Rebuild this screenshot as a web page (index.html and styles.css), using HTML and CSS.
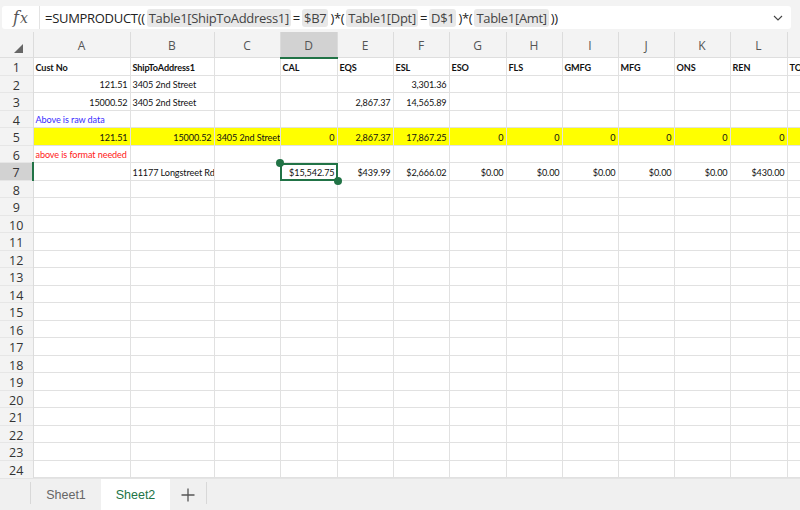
FILE: index.html
```html
<!DOCTYPE html>
<html>
<head>
<meta charset="utf-8">
<link rel="stylesheet" href="styles.css">
</head>
<body>
<div class="app">
  <div class="formula-bar">
    <div class="fbox">
      <div class="fx"><i>f</i><i class="x">x</i></div>
      <div class="ftext">=SUMPRODUCT((<span class="tok">Table1[ShipToAddress1]</span>=<span class="tok">$B7</span>)*(<span class="tok">Table1[Dpt]</span>=<span class="tok">D$1</span>)*(<span class="tok">Table1[Amt]</span>))</div>
      <svg class="chev" width="10" height="6" viewBox="0 0 10 6"><path d="M1 1 L5 5 L9 1" fill="none" stroke="#444" stroke-width="1.1"/></svg>
    </div>
  </div>
  <div class="sheet">
    <table class="grid">
      <colgroup>
        <col class="w-rh"><col class="w-a"><col class="w-b"><col class="w-c"><col class="w-57"><col class="w-56"><col class="w-56"><col class="w-57"><col class="w-56"><col class="w-56"><col class="w-56"><col class="w-56"><col class="w-57"><col class="w-m">
      </colgroup>
      <thead>
        <tr>
          <th class="corner"><svg width="9" height="9" viewBox="0 0 9 9"><path d="M9 0 L9 9 L0 9 Z" fill="#666"/></svg></th>
          <th>A</th><th>B</th><th>C</th><th class="sel">D</th><th>E</th><th>F</th><th>G</th><th>H</th><th>I</th><th>J</th><th>K</th><th>L</th><th></th>
        </tr>
      </thead>
      <tbody>
        <tr><th>1</th><td class="b">Cust No</td><td class="b">ShipToAddress1</td><td></td><td class="b">CAL</td><td class="b">EQS</td><td class="b">ESL</td><td class="b">ESO</td><td class="b">FLS</td><td class="b">GMFG</td><td class="b">MFG</td><td class="b">ONS</td><td class="b">REN</td><td class="b">TO</td></tr>
        <tr><th>2</th><td class="r">121.51</td><td>3405 2nd Street</td><td></td><td></td><td></td><td class="r">3,301.36</td><td></td><td></td><td></td><td></td><td></td><td></td><td></td></tr>
        <tr><th>3</th><td class="r">15000.52</td><td>3405 2nd Street</td><td></td><td></td><td class="r">2,867.37</td><td class="r">14,565.89</td><td></td><td></td><td></td><td></td><td></td><td></td><td></td></tr>
        <tr><th>4</th><td class="blue">Above is raw data</td><td></td><td></td><td></td><td></td><td></td><td></td><td></td><td></td><td></td><td></td><td></td><td></td></tr>
        <tr class="yellow"><th>5</th><td class="r">121.51</td><td class="r">15000.52</td><td>3405 2nd Street</td><td class="r">0</td><td class="r">2,867.37</td><td class="r">17,867.25</td><td class="r">0</td><td class="r">0</td><td class="r">0</td><td class="r">0</td><td class="r">0</td><td class="r">0</td><td></td></tr>
        <tr><th>6</th><td class="red">above is format needed</td><td></td><td></td><td></td><td></td><td></td><td></td><td></td><td></td><td></td><td></td><td></td><td></td></tr>
        <tr><th class="selrow">7</th><td></td><td>11177 Longstreet Rd</td><td></td><td class="r active"><div class="cellwrap">$15,542.75<span class="selbox"></span><span class="dot tl"></span><span class="dot br"></span></div></td><td class="r">$439.99</td><td class="r">$2,666.02</td><td class="r">$0.00</td><td class="r">$0.00</td><td class="r">$0.00</td><td class="r">$0.00</td><td class="r">$0.00</td><td class="r">$430.00</td><td></td></tr>
        <tr><th>8</th><td></td><td></td><td></td><td></td><td></td><td></td><td></td><td></td><td></td><td></td><td></td><td></td><td></td></tr>
        <tr><th>9</th><td></td><td></td><td></td><td></td><td></td><td></td><td></td><td></td><td></td><td></td><td></td><td></td><td></td></tr>
        <tr><th>10</th><td></td><td></td><td></td><td></td><td></td><td></td><td></td><td></td><td></td><td></td><td></td><td></td><td></td></tr>
        <tr><th>11</th><td></td><td></td><td></td><td></td><td></td><td></td><td></td><td></td><td></td><td></td><td></td><td></td><td></td></tr>
        <tr><th>12</th><td></td><td></td><td></td><td></td><td></td><td></td><td></td><td></td><td></td><td></td><td></td><td></td><td></td></tr>
        <tr><th>13</th><td></td><td></td><td></td><td></td><td></td><td></td><td></td><td></td><td></td><td></td><td></td><td></td><td></td></tr>
        <tr><th>14</th><td></td><td></td><td></td><td></td><td></td><td></td><td></td><td></td><td></td><td></td><td></td><td></td><td></td></tr>
        <tr><th>15</th><td></td><td></td><td></td><td></td><td></td><td></td><td></td><td></td><td></td><td></td><td></td><td></td><td></td></tr>
        <tr><th>16</th><td></td><td></td><td></td><td></td><td></td><td></td><td></td><td></td><td></td><td></td><td></td><td></td><td></td></tr>
        <tr><th>17</th><td></td><td></td><td></td><td></td><td></td><td></td><td></td><td></td><td></td><td></td><td></td><td></td><td></td></tr>
        <tr><th>18</th><td></td><td></td><td></td><td></td><td></td><td></td><td></td><td></td><td></td><td></td><td></td><td></td><td></td></tr>
        <tr><th>19</th><td></td><td></td><td></td><td></td><td></td><td></td><td></td><td></td><td></td><td></td><td></td><td></td><td></td></tr>
        <tr><th>20</th><td></td><td></td><td></td><td></td><td></td><td></td><td></td><td></td><td></td><td></td><td></td><td></td><td></td></tr>
        <tr><th>21</th><td></td><td></td><td></td><td></td><td></td><td></td><td></td><td></td><td></td><td></td><td></td><td></td><td></td></tr>
        <tr><th>22</th><td></td><td></td><td></td><td></td><td></td><td></td><td></td><td></td><td></td><td></td><td></td><td></td><td></td></tr>
        <tr><th>23</th><td></td><td></td><td></td><td></td><td></td><td></td><td></td><td></td><td></td><td></td><td></td><td></td><td></td></tr>
        <tr><th>24</th><td></td><td></td><td></td><td></td><td></td><td></td><td></td><td></td><td></td><td></td><td></td><td></td><td></td></tr>
      </tbody>
    </table>
  </div>
  <div class="tabs">
    <div class="tab-sep"></div>
    <div class="tab">Sheet1</div>
    <div class="tab active">Sheet2</div>
    <div class="tab add"><svg width="14" height="14" viewBox="0 0 14 14"><path d="M7 0.5 V13.5 M0.5 7 H13.5" stroke="#555" stroke-width="1.3"/></svg></div>
    <div class="tab-sep"></div>
  </div>
</div>
</body>
</html>
```
FILE: styles.css
```css
* { box-sizing: border-box; }
html, body { margin: 0; padding: 0; }
body { width: 800px; height: 510px; overflow: hidden; background: #f3f3f3; font-family: "Lato", "Liberation Sans", sans-serif; }
.app { display: flex; flex-direction: column; height: 510px; }

.formula-bar { height: 32px; padding: 6px 9px 3px 2px; background: #f3f3f3; }
.fbox { height: 23px; background: #fff; border-radius: 3px; display: flex; align-items: center; }
.fx { width: 38px; height: 23px; border-right: 1px solid #e3e3e3; display: flex; align-items: center; justify-content: center; font-family: "DejaVu Serif", "Liberation Serif", serif; font-size: 16px; color: #555; }
.fx i { font-style: italic; }
.fx .x { font-size: 14px; margin-left: 1px; }
.ftext { flex: 1; padding-left: 5px; font-family: "Open Sans", "Noto Sans", sans-serif; font-size: 13px; color: #222; white-space: nowrap; letter-spacing: -0.3px; }
.tok { display: inline-block; background: #e8e8e8; border-radius: 3px; padding: 0 2px; margin: 0 2px; line-height: 18px; color: #444; }
.chev { margin-right: 8px; }

.sheet { flex: 1; height: 446px; overflow: hidden; background: #fff; }
.grid { border-collapse: collapse; table-layout: fixed; width: 800px; }
.w-rh { width: 33px; } .w-a { width: 97px; } .w-b { width: 84px; } .w-c { width: 66px; }
.w-56 { width: 56px; } .w-57 { width: 57px; } .w-m { width: 13px; }

.grid thead th { height: 24px; background: #f3f3f3; font-weight: normal; font-family: "Open Sans", "Noto Sans", sans-serif; font-size: 12px; color: #555; border-left: 1px solid #dcdcdc; border-bottom: 1px solid #dedede; padding: 0; padding-top: 2px; text-align: center; }
.grid thead th.corner { border-left: none; text-align: left; padding: 8px 0 0 14px; vertical-align: top; }
.grid thead th.sel { background: #d2d2d2; border-bottom: 2px solid #217346; }
.grid tbody th { height: 17.5px; background: #f3f3f3; font-weight: normal; font-family: "Open Sans", "Noto Sans", sans-serif; font-size: 12.5px; color: #333; border-right: 1px solid #dcdcdc; border-top: 1px solid #e6e6e6; padding: 3px 0 0 0; text-align: center; line-height: 13px; }
.grid tbody th.selrow { background: #d2d2d2; border-right: 2px solid #217346; }
.grid td { height: 17.5px; border: 1px solid #e1e1e1; padding: 3px 2px 0 2px; font-size: 9.1px; letter-spacing: -0.1px; color: #111; white-space: nowrap; overflow: hidden; line-height: 12px; }
.grid td.r { text-align: right; }
.grid td.b { font-weight: bold; }
.grid td.blue { color: #3a2dff; }
.grid td.red { color: #ff2020; }
.grid tr.yellow td { background: #ffff00; }
.grid td.active { overflow: visible; position: relative; }
.cellwrap { position: relative; }
.selbox { position: absolute; left: -3px; right: -3px; top: -4px; bottom: -2px; border: 2px solid #217346; pointer-events: none; }
.dot { position: absolute; width: 8px; height: 8px; border-radius: 50%; background: #217346; }
.dot.tl { left: -7px; top: -8px; }
.dot.br { right: -7px; bottom: -6px; }

.tabs { height: 32px; background: #f0f0f0; display: flex; align-items: stretch; padding-left: 30px; font-family: "Liberation Sans", Arial, sans-serif; font-size: 12.5px; color: #666; border-top: 1px solid #e4e4e4; }
.tab-sep { width: 1px; background: #d8d8d8; margin: 3px 0 6px; }
.tab { width: 70px; display: flex; align-items: center; justify-content: center; }
.tab.active { background: #fff; color: #217346; width: 69px; }
.tab.add { width: 36px; }
```
